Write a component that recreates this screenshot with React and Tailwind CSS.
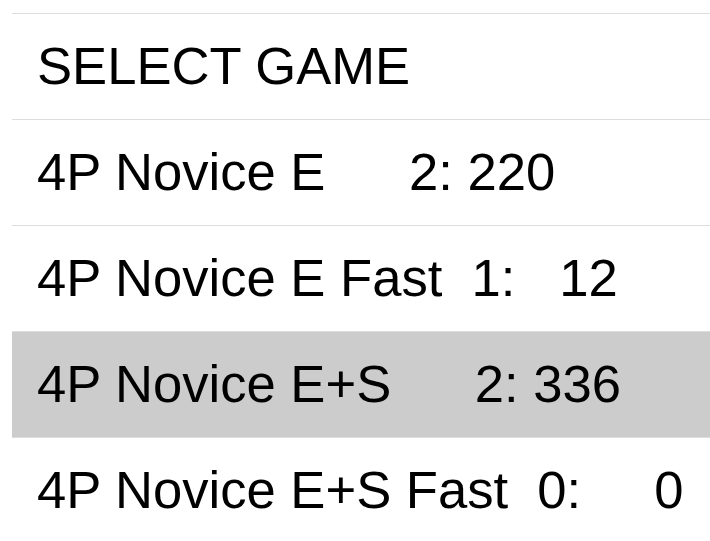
import React from "react";

const rows = [
  { label: "4P Novice E     \u20092: 220" },
  { label: "4P Novice E Fast  1:   12" },
  { label: "4P Novice E+S     \u20092: 336", selected: true },
  { label: "4P Novice E+S Fast  0:     0" },
];

export default function App() {
  return (
    <div className="bg-white min-h-screen pt-[13px] pl-3 font-['Liberation_Sans',Arial,sans-serif] text-black">
      <ul>
        <li className="h-[106px] border-t border-[#dddddd] flex items-center pl-[25px] text-[52.6px] leading-none whitespace-pre">
          SELECT GAME
        </li>
        {rows.map((row, i) => (
          <li
            key={i}
            className={`h-[106px] border-t border-[#dddddd] flex items-center pl-[25px] text-[52.6px] leading-none whitespace-pre ${
              row.selected ? "bg-[#cccccc]" : ""
            }`}
          >
            {row.label}
          </li>
        ))}
      </ul>
    </div>
  );
}
